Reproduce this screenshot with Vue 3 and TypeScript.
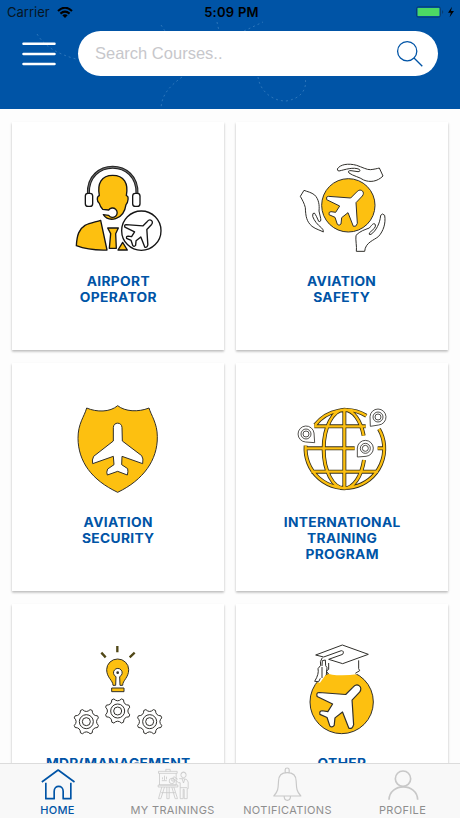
<script setup lang="ts">
interface Course { id: string; lines: string[]; view: string; width: number }
interface Tab { id: string; label: string; view: string; active?: boolean }

const courses: Course[] = [
  { id: 'operator', lines: ['AIRPORT', 'OPERATOR'], view: '0 0 318 315', width: 106 },
  { id: 'safety', lines: ['AVIATION', 'SAFETY'], view: '0 0 312 315', width: 104 },
  { id: 'security', lines: ['AVIATION', 'SECURITY'], view: '0 3 318 315', width: 106 },
  { id: 'international', lines: ['INTERNATIONAL', 'TRAINING', 'PROGRAM'], view: '0 3 312 315', width: 104 },
  { id: 'management', lines: ['MDP(MANAGEMENT'], view: '0 6 318 315', width: 106 },
  { id: 'other', lines: ['OTHER'], view: '0 6 312 315', width: 104 },
]

const tabs: Tab[] = [
  { id: 'home', label: 'HOME', view: '121.5 48 102 108', active: true },
  { id: 'trainings', label: 'MY TRAININGS', view: '466.5 48 102 108' },
  { id: 'notifications', label: 'NOTIFICATIONS', view: '121.5 48 102 108' },
  { id: 'profile', label: 'PROFILE', view: '467 48 102 108' },
]

const plane =
  'M182 129 L200 111 C211 98 227 110 217 123 L198 143 L202 205 Q199 217 190 214 L174 173 L155 188 L153 207 Q147 214 142 208 L135 187 L117 179 Q115 170 123 170 L137 172 L149 153 L110 134 Q107 124 115 124 Z'

const globe =
  'M229 62 A118 118 0 0 0 75 90 M47 152 A118 118 0 1 0 267 102 M163 44 A62 118 0 0 0 163 280 M163 44 A62 118 0 0 1 221 122 M222 195 A62 118 0 0 1 163 280 M163 44 V280 M73 94 H227 M46 160 H194 M263 160 H281 M64 230 H264'

const gears = [[64, 260], [158, 228], [254, 260]]

function gearPath(cx: number, cy: number): string {
  const at = (r: number, deg: number) => {
    const a = (deg * Math.PI) / 180
    return `${(cx + r * Math.cos(a)).toFixed(1)} ${(cy + r * Math.sin(a)).toFixed(1)}`
  }
  let d = ''
  for (let i = 0; i < 8; i++) {
    const a = i * 45 + 22.5
    d += `${i ? 'L' : 'M'}${at(38, a - 5)} L${at(38, a + 5)} Q${at(25, a + 22.5)} ${at(38, a + 40)} `
  }
  return d + 'Z'
}
</script>

<template>
  <div class="app">
    <header class="header">
      <svg class="trail" viewBox="0 0 460 109">
        <path d="M37 34 C45 47 58 54 76 59 M161 25 L165 31 M217 22 L219 31 M182 77 C170 86 162 94 161 108 M244 31 L263 22 M258 77 C260 91 272 101 286 101 C299 99 308 91 305 77" />
      </svg>
      <div class="status">
        <div class="carrier">
          <span>Carrier</span>
          <svg class="wifi" viewBox="0 0 16 11">
            <path d="M1 4 Q8 -2.5 15 4 M3.4 6.6 Q8 2.6 12.6 6.6" />
            <path class="dot" d="M5.3 8.2 Q8 6.2 10.7 8.2 L8 11 Z" />
          </svg>
        </div>
        <span class="time">5:09 PM</span>
        <svg class="battery" viewBox="0 0 40 12">
          <rect class="shell" x="1.5" y=".8" width="24" height="10.4" rx="2" />
          <rect class="charge" x="2.6" y="2" width="21.8" height="8" rx=".6" />
          <path class="tip" d="M27 4 Q29.5 6 27 8Z" />
          <path d="M37 .8 L33 6.8 H35.8 L34.6 11.2 L39 5 H36Z" />
        </svg>
      </div>
      <div class="search-row">
        <svg class="menu" viewBox="0 0 34 24"><path d="M1.5 1.8 H32.5 M1.5 12 H32.5 M1.5 22 H32.5" /></svg>
        <div class="search">
          <span>Search Courses..</span>
          <svg viewBox="0 0 28 28"><circle cx="11.2" cy="11.2" r="9.6" /><path d="M18 18 L26.3 26.3" /></svg>
        </div>
      </div>
    </header>

    <main class="grid">
      <article v-for="c in courses" :key="c.id" class="card">
        <svg class="art" :viewBox="c.view" :width="c.width" height="105">
          <g v-if="c.id === 'operator'" class="bold">
            <path class="band" d="M70 117 C66 10 220 10 216 117" />
            <path class="band-light" d="M70 117 C66 10 220 10 216 117" />
            <rect x="61" y="115" width="22" height="39" rx="8" />
            <rect x="203" y="115" width="22" height="39" rx="8" />
            <path class="gold" d="M103 122 C96 85 110 61 143 61 C177 61 191 85 184 122 C193 122 189 144 183 149 C180 170 169 186 152 191 C138 195 123 191 115 179 L131 181 A14 14 0 1 0 131 165 L113 163 C108 158 105 152 103 145 C96 142 94 124 103 122Z" />
            <path class="gold" d="M107 196 L126 285 C95 286 60 282 34 272 C36 240 42 222 60 211 C75 204 92 201 107 196Z" />
            <path class="gold" d="M128 219 H160 L152 236 L154 280 H133 L137 236Z" />
            <path class="gold" d="M173 262 L187 285 H159Z" />
            <circle cx="229" cy="227" r="59" />
            <path class="heavy" :d="plane" transform="translate(97 116) scale(.75)" />
          </g>
          <g v-else-if="c.id === 'safety'">
            <circle class="gold" cx="175" cy="151" r="80" />
            <path class="white" :d="plane" />
            <path d="M142 42 C150 28 175 24 200 31 C215 36 232 45 241 44 C252 43 260 41 268 39 L279 63 C262 80 240 83 221 75 C208 66 190 63 177 54 Q172 46 183 47 L204 50 Q213 50 208 43 C190 35 165 44 147 48 Q142 48 142 42Z" />
            <path d="M42 106 L31 124 C37 135 43 145 46 158 C47 185 50 200 66 214 C78 223 92 226 100 231 Q101 224 94 218 C82 209 72 196 68 184 Q67 173 73 174 C78 180 82 190 86 199 Q94 202 92 190 L87 168 C89 150 86 132 74 120 C64 112 52 110 42 106Z" />
            <path d="M199 289 C201 275 196 255 198 241 C210 228 225 224 238 219 C247 208 250 204 255 207 Q259 213 253 220 L238 234 Q236 241 243 238 C258 228 270 205 272 181 Q277 173 284 181 C288 205 280 228 266 244 C252 256 226 262 224 289Z" />
          </g>
          <g v-else-if="c.id === 'security'">
            <path class="gold" d="M65 39 C95 52 135 52 158 32 C180 50 220 52 252 39 C258 60 277 85 277 125 C278 195 235 255 158 292 C80 255 40 200 39 130 C39 85 58 65 65 39Z" />
            <path class="white" d="M145 98 C145 80 171 80 171 98 L172 138 L230 182 Q236 190 233 206 L171 184 L170 209 L188 221 Q190 230 187 240 L158 229 L127 240 Q123 232 128 222 L147 209 L145 184 L83 206 Q80 195 86 184 L145 138Z" />
          </g>
          <g v-else-if="c.id === 'international'">
            <path class="globe-edge" :d="globe" />
            <path class="globe-fill" :d="globe" />
            <g class="pins">
              <path d="M74 143 L47 141 A24 24 0 1 1 72 114 Z" />
              <circle cx="48" cy="117" r="15" /><circle cx="48" cy="117" r="9" />
              <path d="M241 94 L240 65 A24 24 0 1 1 266 90 Z" />
              <circle cx="264" cy="66" r="15" /><circle cx="264" cy="66" r="9" />
              <path d="M202 186 L202 159 A24 24 0 1 1 228 184 Z" />
              <circle cx="226" cy="160" r="15" /><circle cx="226" cy="160" r="9" />
            </g>
          </g>
          <g v-else-if="c.id === 'management'">
            <path class="rays" d="M157 33 V52 M109 53 L122 67 M209 53 L194 67" />
            <path class="gold" d="M144 151 C144 136 125 128 125 104 A33 32 0 0 1 191 104 C191 128 173 136 173 151 L165 151 L164 125 A13 13 0 1 0 153 125 L152 151Z" />
            <circle class="ink" cx="158" cy="113" r="4" />
            <rect class="gold" x="140" y="159" width="37" height="11" />
            <g v-for="g in gears" :key="g[0]">
              <path :d="gearPath(g[0], g[1])" />
              <circle :cx="g[0]" :cy="g[1]" r="21" />
              <circle :cx="g[0]" :cy="g[1]" r="12" />
            </g>
          </g>
          <g v-else>
            <circle class="gold" cx="155" cy="201" r="95" />
            <path class="blank" d="M72 60 H230 V108 Q207 121 156 121 Q120 121 111 114 L90 143 L68 138Z" />
            <path d="M116 84 L116 103 L108 109 L116 116 M206 76 V101 L209 107 L196 115" />
            <path class="white" d="M116 73 L158 58 Q164 48 154 47 L101 66 L77 60 L157 30 L235 58 L158 86 Z" />
            <path d="M97 68 Q88 80 92 91 L84 101 Q88 116 74 139 L86 140 L91 130 M96 96 V129 M96 93 L97 77 L106 75 L107 92 L111 98 L109 118" />
            <path class="white" :d="plane" transform="translate(-49.5 25) scale(1.19)" />
          </g>
        </svg>
        <h2 class="title"><span v-for="l in c.lines" :key="l">{{ l }}</span></h2>
      </article>
    </main>

    <nav class="tabs">
      <div v-for="t in tabs" :key="t.id" class="tab" :class="[t.id, { active: t.active }]">
        <svg :viewBox="t.view" width="34" height="36">
          <path v-if="t.id === 'home'" d="M124 96 L173 60 L222 96 M136 98 V146 H161 V124 C161 104 188 104 188 124 V146 H211 V98" />
          <g v-else-if="t.id === 'trainings'">
            <path d="M474 64 H530 V70 H474Z M477 70 V105 H527 V70 M473 105 H532 V111 H473Z M496 64 V58 H509 V64 M484 111 L474 146 H481 L492 111 M520 111 L531 146 H524 L514 111 M499 111 V146 H506 V111 M482 128 H524" />
            <path d="M484 92 H499 M486 88 V82 M492 90 V77 M498 88 V80" />
            <circle cx="514" cy="93" r="8" /><path d="M514 85 V93 H522" />
            <circle cx="549" cy="75" r="8" />
            <path d="M541 71 Q549 61 557 71 M532 88 L520 80 L517 84 L534 98 H539 V146 H548 V118 H551 V146 H560 V116 H563 V96 Q561 86 549 86 H536 M545 87 L549 99 L553 87 M539 113 H560" />
          </g>
          <g v-else-if="t.id === 'notifications'">
            <path d="M164 68 V59 Q164 54 170 54 Q176 54 176 59 V68 M130 138 C143 124 143 115 144 94 C144 76 155 68 170 68 C185 68 197 76 197 94 C198 115 198 124 211 138Z M161 139 C161 155 180 155 180 139" />
          </g>
          <g v-else><circle cx="518" cy="86" r="23" /><path d="M476 149 C478 98 560 98 562 149" /></g>
        </svg>
        <span>{{ t.label }}</span>
      </div>
    </nav>
  </div>
</template>

<style>
body { background: #fdfdfd; }
</style>

<style scoped>
.app { display: flex; flex-direction: column; width: 460px; height: 818px; overflow: hidden; background: #fdfdfd; font-family: Inter, "Liberation Sans", sans-serif; }
.header { position: relative; flex: 0 0 109px; background: #0054a6; }
.trail { position: absolute; inset: 0; width: 460px; height: 109px; fill: none; stroke: #3279bc; stroke-width: .9; stroke-dasharray: 2 3; }
.status { position: relative; display: grid; grid-template-columns: 1fr auto 1fr; align-items: center; height: 24px; padding: 0 5px 0 7px; font-size: 13px; color: #071522; }
.carrier { display: flex; align-items: center; gap: 7px; letter-spacing: 0; }
.wifi { width: 16px; height: 11px; fill: none; stroke: #000; stroke-width: 2.1; }
.wifi .dot { fill: #000; stroke: none; }
.time { padding-left: 1px; font-weight: 600; letter-spacing: .25px; color: #000; }
.battery { justify-self: end; width: 40px; height: 12px; }
.battery .shell { fill: none; stroke: #073d73; stroke-width: 1; }
.battery .charge { fill: #4cd964; }
.battery .tip { fill: #073d73; }
.search-row { position: relative; display: flex; align-items: center; gap: 22px; margin-top: 7px; padding: 0 22px; }
.menu { width: 34px; height: 24px; stroke: #fff; stroke-width: 2.5; stroke-linecap: round; }
.search { display: flex; flex: 1; align-items: center; justify-content: space-between; box-sizing: border-box; height: 45px; padding: 0 14px 0 17px; border-radius: 23px; background: #fff; color: #c7c7cb; font: 16.5px "Liberation Sans", sans-serif; }
.search svg { width: 28px; height: 28px; fill: none; stroke: #0054a6; stroke-width: 1.3; }

.grid { display: grid; flex: 1; grid-template-columns: 212px 212px; grid-auto-rows: 228px; gap: 13px 12px; min-height: 0; overflow: hidden; padding: 13px 12px 0; }
.card { display: flex; flex-direction: column; align-items: center; box-sizing: border-box; padding-top: 33px; background: #fff; box-shadow: 0 2px 2px rgba(0, 0, 0, .16), -1px 1px 2px rgba(0, 0, 0, .06), 1px 1px 2px rgba(0, 0, 0, .06); }
.art { flex: none; fill: none; stroke: #302f2b; stroke-width: 3; stroke-linejoin: round; }
.title { display: flex; flex-direction: column; align-items: center; margin: 12.5px 0 0; color: #0054a6; font-size: 13px; font-weight: 700; line-height: 16px; letter-spacing: .3px; white-space: nowrap; transform: scaleX(1.06); }
.gold { fill: #fdc010; }
.white { fill: #fff; }
.blank { fill: #fff; stroke: none; }
.ink { fill: #302f2b; stroke: none; }
.bold { stroke: #151515; stroke-width: 4; }
.heavy { stroke-width: 5.4; }
.band { stroke: #222; stroke-width: 9; }
.band-light { stroke: #999; stroke-width: 2; }
.rays { stroke: #514817; stroke-width: 7; }
.pins { stroke-width: 2.5; }
.globe-edge { stroke: #39321a; stroke-width: 12; }
.globe-fill { stroke: #fdc010; stroke-width: 7; }

.tabs { display: grid; flex: 0 0 55px; grid-template-columns: repeat(4, 1fr); box-sizing: border-box; border-top: 1px solid #dcdcdc; background: #f8f8f8; }
.tab { display: flex; flex-direction: column; align-items: center; padding-top: 2px; color: #8e8e8e; font-size: 11px; line-height: 16px; letter-spacing: .35px; }
.tab svg { fill: none; stroke: #c8c8c8; stroke-width: 3.5; stroke-linejoin: round; }
.tab.trainings svg { stroke-width: 2.4; }
.tab.profile svg { stroke-width: 5; }
.tab.active { color: #0054a6; }
.tab.active svg { stroke: #0054a6; stroke-width: 5; }
.tab.active span { font-weight: 500; }
</style>
